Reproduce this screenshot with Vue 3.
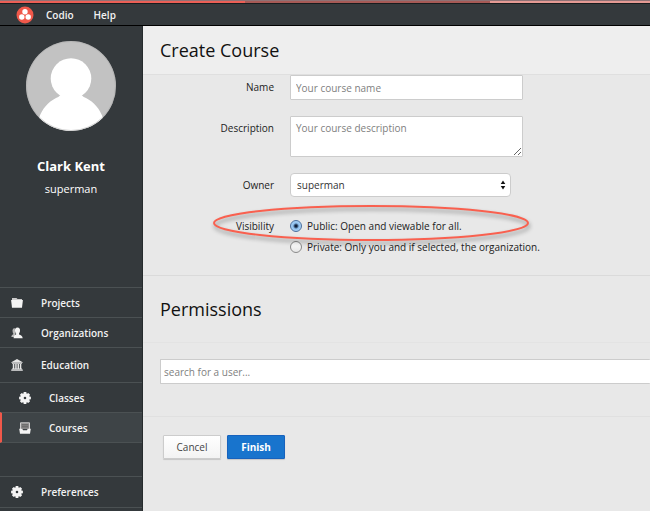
<script setup>
import { ref } from 'vue'

const name = ref('')
const description = ref('')
const owner = ref('superman')
const visibility = ref('public')
const search = ref('')

const links = [
  { label: 'Projects', icon: 'folder' },
  { label: 'Organizations', icon: 'people' },
  { label: 'Education', icon: 'bank', tall: true },
  { label: 'Classes', icon: 'gear', sub: true },
  { label: 'Courses', icon: 'tray', sub: true, active: true },
]
</script>

<template>
  <div class="app">
    <div class="strip"><i class="s1"></i><i class="s2"></i><i class="s3"></i></div>
    <header class="topbar">
      <a href="#" class="logo" aria-label="Home">
        <svg viewBox="0 0 18 18" width="18" height="18">
          <circle cx="9" cy="9" r="8.5" fill="#f0584a" />
          <circle cx="9" cy="5.700" r="2.700" fill="#fff" />
          <circle cx="5.800" cy="11" r="2.700" fill="#fff" />
          <circle cx="12.200" cy="11" r="2.700" fill="#fff" />
        </svg>
      </a>
      <a href="#">Codio</a>
      <a href="#">Help</a>
    </header>

    <div class="body">
      <aside class="sidebar">
        <div class="profile">
          <svg class="avatar" viewBox="0 0 90 90" width="90" height="90">
            <defs><clipPath id="face"><circle cx="45" cy="45" r="45" /></clipPath></defs>
            <g clip-path="url(#face)">
              <rect width="90" height="90" fill="#c2c2c2" />
              <circle cx="45" cy="37.500" r="20.300" fill="#fff" />
              <path d="M36 51h18q1 4 6 6c8 4 14 11 17 20v15H13V77c3-9 9-16 17-20q5-2 6-6z" fill="#fff" />
            </g>
            <circle cx="45" cy="45" r="44.500" fill="none" stroke="#aaa" stroke-opacity=".5" />
          </svg>
          <strong>Clark Kent</strong>
          <span>superman</span>
        </div>
        <nav>
          <a
            v-for="l in links"
            :key="l.label"
            href="#"
            class="item"
            :class="{ tall: l.tall, sub: l.sub, active: l.active }"
          >
            <svg v-if="l.icon === 'folder'" viewBox="0 0 12 12" width="12" height="12">
              <path d="M1 3V1h4.500L6.500 2H11v1z" fill="#ccc" />
              <path d="M.1 3h11.800L11 10.800H1z" fill="#f4f4f4" />
            </svg>
            <svg v-else-if="l.icon === 'people'" viewBox="0 0 12 12" width="12" height="12">
              <path d="M1.500 3.500q0-2.300 2.200-2.500L4.500 7l-1 3H.3q0-2 2.200-3Q1.500 5.500 1.500 3.500z" fill="#bbb" />
              <path d="M6.500.5c1.900 0 2.700 1.400 2.500 3.200 0 1.300-.6 2.100-1 2.800v1c1.900.6 3.500 1.400 3.700 3.800H2.600C2.700 8.700 3.700 8 5.100 7.500v-1c-.6-.7-1-1.500-1.100-2.800C3.800 1.900 4.600.5 6.500.5z" fill="#f4f4f4" />
            </svg>
            <svg v-else-if="l.icon === 'bank'" viewBox="0 0 12 12" width="12" height="12">
              <path d="M6 .1l5.700 3.100v.6H.3v-.6zM1 4.300h10v.8H1zM1.800 5h1.500v4.500H1.800zM4.200 5h1.500v4.500H4.200zM6.500 5H8v4.500H6.500zM8.800 5h1.500v4.500H8.800zM1 9.500h10v.8H1zM.2 10.600h11.600v1.200H.2z" fill="#e6e6e6" />
            </svg>
            <svg v-else-if="l.icon === 'gear'" viewBox="0 0 12 12" width="12" height="12">
              <g fill="#f4f4f4">
                <path fill-rule="evenodd" d="M6 1.500a4.500 4.500 0 1 0 0 9 4.500 4.500 0 0 0 0-9zm0 3.200a1.300 1.300 0 1 1 0 2.600 1.300 1.300 0 0 1 0-2.600z" />
                <path v-for="a in 8" :key="a" d="M4.700.1h2.600l.4 2.400H4.300z" :transform="`rotate(${a * 45} 6 6)`" />
              </g>
            </svg>
            <svg v-else viewBox="0 0 12 12" width="12" height="12">
              <path d="M1.500 7V.8h9V7" fill="#888" stroke="#ccc" />
              <path d="M3 2.800h6M3 4.800h6" stroke="#555" stroke-width=".7" />
              <path d="M.2 6.800h3l.9 1.500h3.800l.9-1.500h3L11 11.800H1z" fill="#f4f4f4" />
            </svg>
            {{ l.label }}
          </a>
          <a href="#" class="item prefs">
            <svg viewBox="0 0 12 12" width="12" height="12">
              <g fill="#f4f4f4">
                <path fill-rule="evenodd" d="M6 1.500a4.500 4.500 0 1 0 0 9 4.500 4.500 0 0 0 0-9zm0 3.200a1.300 1.300 0 1 1 0 2.600 1.300 1.300 0 0 1 0-2.600z" />
                <path v-for="a in 8" :key="a" d="M4.700.1h2.600l.4 2.400H4.300z" :transform="`rotate(${a * 45} 6 6)`" />
              </g>
            </svg>
            Preferences
          </a>
        </nav>
      </aside>

      <main>
        <h1>Create Course</h1>
        <form @submit.prevent>
          <section class="fields">
            <label for="name">Name</label>
            <input id="name" v-model="name" type="text" class="box" placeholder="Your course name" />
            <label for="description">Description</label>
            <textarea id="description" v-model="description" class="box" placeholder="Your course description"></textarea>
            <label for="owner">Owner</label>
            <div class="select">
              <select id="owner" v-model="owner"><option>superman</option></select>
              <svg viewBox="0 0 6 10" width="6" height="10"><path d="M3 .5L5.300 4H.7zM3 9.500L.7 6h4.600z" fill="#111" /></svg>
            </div>
            <span id="vis" class="vis">Visibility</span>
            <div class="radios" role="radiogroup" aria-labelledby="vis">
              <label><input v-model="visibility" type="radio" name="visibility" value="public" />Public: Open and viewable for all.</label>
              <label><input v-model="visibility" type="radio" name="visibility" value="private" />Private: Only you and if selected, the organization.</label>
              <svg class="ring" viewBox="0 0 320 44" width="320" height="44" aria-hidden="true">
                <ellipse cx="160" cy="20" rx="157" ry="17" fill="none" stroke="#f9604f" stroke-width="2" />
              </svg>
            </div>
          </section>
          <h2>Permissions</h2>
          <section class="search">
            <input v-model="search" type="text" class="box" aria-label="User search" placeholder="search for a user..." />
          </section>
          <div class="actions">
            <button type="button">Cancel</button>
            <button type="submit" class="primary">Finish</button>
          </div>
        </form>
      </main>
    </div>
  </div>
</template>

<style>
body {
  margin: 0;
  background: #e8e8e8;
}
</style>

<style scoped>
.app {
  min-height: 100vh;
  display: flex;
  flex-direction: column;
  overflow: hidden;
  font: 10px/16px "Open Sans", "Noto Sans", sans-serif;
  color: #222;
}
.app * {
  box-sizing: border-box;
}
a {
  color: #f2f2f2;
  text-decoration: none;
}
.strip {
  display: flex;
  height: 4px;
  border-bottom: 1px solid #181c1e;
}
.strip i {
  border-top: 1px solid #8f7275;
}
.s1 {
  flex: 245;
  background: #ec5f56;
}
.s2 {
  flex: 245;
  background: #a75a56;
}
.s3 {
  flex: 160;
  background: #e59a94;
}
.topbar {
  display: flex;
  align-items: center;
  gap: 20px;
  height: 22px;
  padding-left: 16px;
  background: #34393c;
  border-bottom: 1px solid #000;
  font-weight: 600;
}
.logo {
  display: flex;
  margin-right: -8px;
}
.body {
  flex: 1;
  display: flex;
}
.sidebar {
  flex: none;
  width: 143px;
  background: #34393c;
  border-right: 1px solid #262b2d;
}
.profile {
  display: flex;
  flex-direction: column;
  align-items: center;
  padding-top: 15px;
  height: 261px;
  color: #fff;
  font-size: 11px;
}
.avatar {
  margin-bottom: 25px;
}
.profile strong {
  font-size: 13px;
  line-height: 20px;
  margin-bottom: 5px;
}
.item {
  display: flex;
  align-items: center;
  gap: 18px;
  height: 30px;
  padding-left: 11px;
  border-top: 1px solid #4b5153;
  font-weight: 600;
}
.tall {
  height: 35px;
}
.sub {
  padding-left: 19px;
}
.active {
  height: 31px;
  background: #3e4447;
  padding-left: 17px;
  border-left: 2px solid #f0584a;
  border-bottom: 1px solid #4b5153;
}
.prefs {
  margin-top: 33px;
  height: 32px;
  border-bottom: 1px solid #4b5153;
}
main {
  flex: 1;
  min-width: 0;
  background: #e8e8e8;
}
h1,
h2 {
  margin: 0;
  font-weight: 400;
  color: #111;
  font-size: 18px;
  line-height: 24px;
}
h1 {
  padding: 12px 17px;
  background: #eee;
  border-bottom: 1px solid #dfdfdf;
}
h2 {
  padding: 21px 17px 21px;
  border-top: 1px solid #dadada;
  border-bottom: 1px solid #e3e3e3;
}
.fields {
  display: grid;
  grid-template-columns: 131px 1fr;
  column-gap: 16px;
  row-gap: 16px;
  padding-bottom: 20px;
}
.fields > label,
.vis {
  text-align: right;
  padding-top: 4px;
}
.vis {
  padding-top: 5px;
}
.box,
select {
  display: block;
  width: 100%;
  margin: 0;
  border: 1px solid #ccc;
  border-radius: 1px;
  background: #fff;
  font: inherit;
  color: #333;
}
.box {
  height: 25px;
  padding: 3px 5px;
}
.box::placeholder {
  color: #808080;
  opacity: 1;
}
.fields .box {
  max-width: 233px;
}
textarea.box {
  height: 41px;
  resize: both;
}
.select {
  display: grid;
  align-items: center;
  max-width: 221px;
}
.select > * {
  grid-area: 1 / 1;
}
.select svg {
  justify-self: end;
  margin-right: 5px;
  pointer-events: none;
}
select {
  appearance: none;
  height: 24px;
  padding: 0 6px;
  border-radius: 4px;
}
.radios {
  position: relative;
  display: flex;
  flex-direction: column;
  gap: 5px;
  padding-top: 5px;
}
.radios label {
  display: flex;
  align-items: center;
  gap: 5px;
}
.radios input {
  appearance: none;
  width: 12px;
  height: 12px;
  margin: 0;
  border: 1px solid #8a8a8a;
  border-radius: 50%;
  background: linear-gradient(#fff, #e6e6e6);
}
.radios input:checked {
  border-color: #4a6f9e;
  background: radial-gradient(circle, #10203a 1px, #8fc0ee 3px, #c4e2fb);
}
.ring {
  position: absolute;
  left: -79px;
  top: -10px;
  pointer-events: none;
  filter: drop-shadow(1px 3px 2px rgba(0, 0, 0, 0.4));
}
.search {
  padding: 16px 0 32px 17px;
  border-bottom: 1px solid #e0e0e0;
}
.search .box {
  border-right: 0;
  padding: 3px;
}
.actions {
  display: flex;
  gap: 6px;
  padding: 18px 20px;
}
button {
  min-width: 58px;
  height: 24px;
  padding: 0 11px;
  border: 1px solid #ccc;
  border-radius: 1px;
  background: linear-gradient(#fff, #f3f3f3);
  box-shadow: 0 1px 1px rgba(0, 0, 0, 0.15);
  font: inherit;
  color: #444;
}
.primary {
  background: #1874cd;
  border-color: #1762bd;
  color: #fff;
  font-weight: 700;
}
</style>
